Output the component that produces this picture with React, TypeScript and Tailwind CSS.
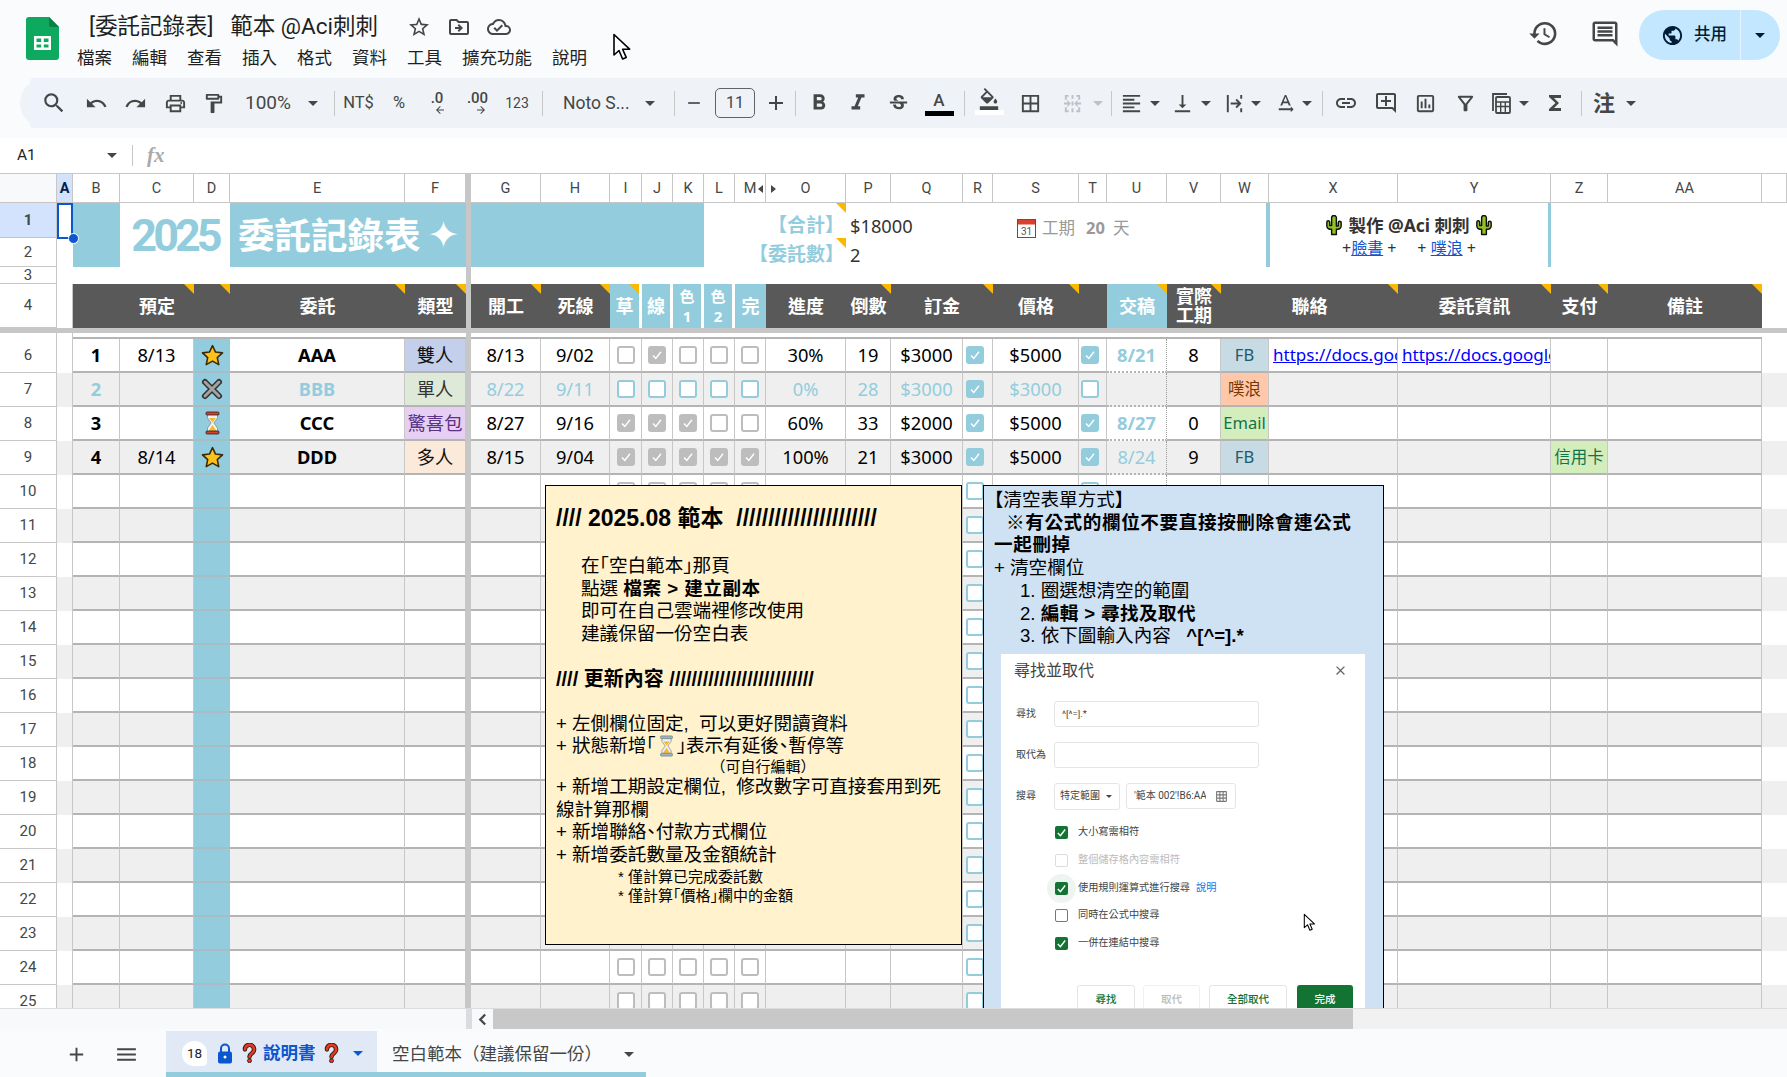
import type { ReactNode } from 'react';
import {
  MdAdd, MdArrowBack, MdArrowForward, MdBorderAll, MdClose, MdFormatAlignLeft, MdFormatBold, MdFormatItalic,
  MdFunctions, MdHistory, MdLink, MdMenu, MdOutlineAddComment, MdOutlineCloudDone, MdOutlineComment,
  MdOutlineDriveFileMove, MdOutlineFilterAlt, MdOutlineFormatColorFill, MdOutlineFormatPaint, MdOutlineGridOn,
  MdOutlineInsertChart, MdOutlinePrint, MdPublic, MdRedo, MdRemove, MdSearch, MdStarBorder, MdStrikethroughS,
  MdTextRotationNone, MdUndo, MdVerticalAlignBottom,
} from 'react-icons/md';

// one column template for every sheet row
const GRID =
  'grid grid-cols-[57px_16px_47px_74px_36px_175px_61px_5px_70px_69px_32px_31px_31px_31px_31px_80px_45px_72px_30px_86px_28px_60px_54px_48px_129px_153px_57px_154px_25px]';

const LETTERS = ['A', 'B', 'C', 'D', 'E', 'F', '', 'G', 'H', 'I', 'J', 'K', 'L', 'M', 'O', 'P', 'Q', 'R', 'S', 'T', 'U', 'V', 'W', 'X', 'Y', 'Z', 'AA', ''];

function Caret({ className = 'border-t-[#444746]' }: { className?: string }) {
  return <span className={`inline-block h-0 w-0 border-x-[5px] border-t-[5px] border-x-transparent ${className}`} />;
}

function Tri() {
  return <span className="absolute right-0 top-0 h-0 w-0 border-l-[10px] border-t-[10px] border-l-transparent border-t-[#fbb800]" />;
}

function T({ className, children }: { className: string; children?: ReactNode }) {
  return <div className={`flex h-full shrink-0 items-center justify-center ${className}`}>{children}</div>;
}

function Sep() {
  return <div className="h-[25px] w-px shrink-0 bg-[#c7c7c7]" />;
}

function Cursor({ className }: { className: string }) {
  return (
    <svg viewBox="0 0 20 28" className={className}>
      <path d="M2 1.5V22l5-4.5 3.6 8.5 3.6-1.6-3.6-8.2h7z" fill="#fff" stroke="#000" strokeWidth="1.6" strokeLinejoin="round" />
    </svg>
  );
}

function SheetsLogo() {
  return (
    <svg viewBox="0 0 33 43" className="h-[43px] w-[33px]">
      <path d="M3 0h20l10 10v30a3 3 0 0 1-3 3H3a3 3 0 0 1-3-3V3a3 3 0 0 1 3-3z" fill="#0da95f" />
      <path d="M23 0l10 10h-8a2 2 0 0 1-2-2z" fill="#0b7d46" />
      <path d="M8 19h17v14H8zM10.5 21.5v3.5h4.7v-3.5zM17.8 21.5v3.5h4.7v-3.5zM10.5 27.5v3h4.7v-3zM17.8 27.5v3h4.7v-3z" fill="#fff" fillRule="evenodd" />
    </svg>
  );
}

function Star() {
  return (
    <svg viewBox="0 0 24 24" className="h-[25px] w-[25px]">
      <path d="M12 2.5l2.9 6.2 6.7.8-5 4.6 1.4 6.7-6-3.4-6 3.4 1.4-6.7-5-4.6 6.7-.8z" fill="#fcc21b" stroke="#3a2a0a" strokeWidth="1.5" strokeLinejoin="round" />
    </svg>
  );
}

function Cross() {
  return (
    <svg viewBox="0 0 24 24" className="h-[24px] w-[24px]">
      <path d="M5 5l14 14M19 5L5 19" stroke="#2f2f2f" strokeWidth="6" strokeLinecap="round" />
      <path d="M5 5l14 14M19 5L5 19" stroke="#a3a3a3" strokeWidth="3" strokeLinecap="round" />
    </svg>
  );
}

function Hourglass({ className = 'h-[24px] w-[17px]', caps = '#d6402b', line = '#222' }: { className?: string; caps?: string; line?: string }) {
  return (
    <svg viewBox="0 0 16 24" className={className}>
      <path d="M3 3h10v4l-3.6 5 3.6 5v4H3v-4l3.6-5L3 7z" fill="#e9f3f8" stroke="#8a8a80" strokeWidth="0.8" />
      <path d="M4.5 7h7L8 11.5zM8 14l4 6H4z" fill="#f7b733" />
      <rect x="1.5" y="1" width="13" height="3" rx="1" fill={caps} stroke={line} strokeWidth="0.8" />
      <rect x="1.5" y="20" width="13" height="3" rx="1" fill={caps} stroke={line} strokeWidth="0.8" />
    </svg>
  );
}

function Cactus() {
  return (
    <svg viewBox="0 0 16 22" className="h-[21px] w-[16px] shrink-0">
      <path d="M5.5 20.500V15H4a3.500 3.500 0 0 1-3.500-3.500V7.500a1.500 1.500 0 0 1 3 0V11h2V3a2.500 2.500 0 0 1 5 0v8.500h2V8a1.500 1.500 0 0 1 3 0v3.500A3.500 3.500 0 0 1 12 15h-1.500v5.500z" fill="#8fc31f" stroke="#111" strokeWidth="1.500" strokeLinejoin="round" />
    </svg>
  );
}

function Question() {
  return (
    <svg viewBox="0 0 16 22" className="h-[20px] w-[15px] shrink-0">
      <path d="M3 7a5 5 0 1 1 8 4c-1.8 1.3-3 2-3 4" fill="none" stroke="#222" strokeWidth="5" strokeLinecap="round" />
      <circle cx="8" cy="19.5" r="2.2" fill="#e8391d" stroke="#222" />
      <path d="M3 7a5 5 0 1 1 8 4c-1.8 1.3-3 2-3 4" fill="none" stroke="#e8391d" strokeWidth="3" strokeLinecap="round" />
    </svg>
  );
}

function Lock() {
  return (
    <svg viewBox="0 0 16 21" className="h-[21px] w-[16px] shrink-0">
      <path d="M4 9V5.5a4 4 0 0 1 8 0V9" fill="none" stroke="#0b57d0" strokeWidth="2" />
      <rect x="1" y="8.5" width="14" height="12" rx="2" fill="#0b57d0" />
      <circle cx="8" cy="14" r="1.5" fill="#fff" />
    </svg>
  );
}

function Calendar() {
  return (
    <svg viewBox="0 0 19 19" className="h-[19px] w-[19px] shrink-0">
      <rect x="0.5" y="0.5" width="18" height="18" fill="#fff" stroke="#555" />
      <rect x="1" y="1" width="17" height="4.5" fill="#d9402f" />
      <text x="9.5" y="15.5" fontSize="10" textAnchor="middle" fill="#555" fontFamily="Roboto, sans-serif">31</text>
    </svg>
  );
}

function Box({ checked, tone }: { checked?: boolean; tone: 'gray' | 'teal' }) {
  const look =
    tone === 'gray'
      ? checked ? 'border-[#bdbdbd] bg-[#bdbdbd]' : 'border-[#bdbdbd] bg-white'
      : checked ? 'border-[#93cddd] bg-[#93cddd]' : 'border-[#93cddd] bg-white';
  return (
    <span className={`flex h-[18px] w-[18px] items-center justify-center rounded-[3px] border-[2.5px] ${look}`}>
      {checked && (
        <svg viewBox="0 0 12 12" className="h-[12px] w-[12px]">
          <path d="M2 6.5l2.8 3L10 2.8" fill="none" stroke="#fff" strokeWidth="1.4" />
        </svg>
      )}
    </span>
  );
}

function MiniBox({ on, tone = 'on' }: { on?: boolean; tone?: 'on' | 'off' | 'dim' }) {
  if (on) {
    return (
      <span className="flex h-[13px] w-[13px] shrink-0 items-center justify-center rounded-[2px] bg-[#137333]">
        <svg viewBox="0 0 12 12" className="h-[11px] w-[11px]">
          <path d="M2 6.5l2.8 3L10 2.8" fill="none" stroke="#fff" strokeWidth="1.6" />
        </svg>
      </span>
    );
  }
  return <span className={`h-[13px] w-[13px] shrink-0 rounded-[2px] border ${tone === 'dim' ? 'border-[#dcdcdc]' : 'border-[#777]'}`} />;
}

type RowData = {
  no: string;
  plan?: string;
  icon?: 'star' | 'cross' | 'glass';
  name: string;
  type: string;
  typeClass: string;
  start: string;
  end: string;
  steps: boolean[];
  progress: string;
  left: string;
  deposit: string;
  price: string;
  paid: boolean;
  done?: string;
  doneClass?: string;
  actual?: string;
  contact?: string;
  contactClass?: string;
  link?: boolean;
  pay?: string;
};

const DATA: RowData[] = [
  { no: '1', plan: '8/13', icon: 'star', name: 'AAA', type: '雙人', typeClass: 'bg-[#c3cfeb] text-[#111]', start: '8/13', end: '9/02', steps: [false, true, false, false, false], progress: '30%', left: '19', deposit: '$3000', price: '$5000', paid: true, done: '8/21', doneClass: 'font-bold', actual: '8', contact: 'FB', contactClass: 'bg-[#c6dbe3] text-[#215a6c]', link: true },
  { no: '2', icon: 'cross', name: 'BBB', type: '單人', typeClass: 'bg-[#dfe9d8] text-[#333]', start: '8/22', end: '9/11', steps: [false, false, false, false, false], progress: '0%', left: '28', deposit: '$3000', price: '$3000', paid: false, contact: '噗浪', contactClass: 'bg-[#ffc8aa] text-[#753800]' },
  { no: '3', icon: 'glass', name: 'CCC', type: '驚喜包', typeClass: 'bg-[#e6cff2] text-[#5a3286]', start: '8/27', end: '9/16', steps: [true, true, true, false, false], progress: '60%', left: '33', deposit: '$2000', price: '$5000', paid: true, done: '8/27', doneClass: 'font-bold', actual: '0', contact: 'Email', contactClass: 'bg-[#d4edbc] text-[#11734b]' },
  { no: '4', plan: '8/14', icon: 'star', name: 'DDD', type: '多人', typeClass: 'bg-[#fbe9da] text-[#111]', start: '8/15', end: '9/04', steps: [true, true, true, true, true], progress: '100%', left: '21', deposit: '$3000', price: '$5000', paid: true, done: '8/24', doneClass: 'font-normal', actual: '9', contact: 'FB', contactClass: 'bg-[#c6dbe3] text-[#215a6c]', pay: '信用卡' },
];

const V = 'border-r border-r-[#c7c7c7] border-b-2 border-b-[#b4b4b4] flex items-center justify-center overflow-hidden whitespace-nowrap';

function RowHead({ n, active, className = '' }: { n?: number; active?: boolean; className?: string }) {
  return (
    <div className={`flex items-center justify-center border-b border-r border-[#c7c7c7] text-[15px] text-[#444746] font-['Roboto','Noto_Sans_CJK_TC',sans-serif] ${active ? 'bg-[#d3e3fd] font-bold text-[#041e49]' : 'bg-white'} ${className}`}>
      {n}
    </div>
  );
}

function SheetRow({ n, data }: { n: number; data?: RowData }) {
  const gray = n % 2 === 1;
  const bg = gray ? 'bg-[#efefef]' : 'bg-white';
  const dim = data?.no === '2';
  const ink = dim ? 'text-[#93cddd]' : 'text-black';
  const tone = dim ? 'teal' : 'gray';
  const steps = data?.steps ?? [false, false, false, false, false];
  return (
    <div className={`${GRID} h-[34px] text-[18.3px] ${bg} ${ink}`}>
      <RowHead n={n} className="bg-white" />
      <div className={`border-r border-[#c7c7c7] ${bg}`} />
      <div className={`${V} font-bold`}>{data?.no}</div>
      <div className={V}>{data?.plan}</div>
      <div className="flex items-center justify-center border-b-2 border-b-[#a9bcc3] bg-[#93cddd]">
        {data?.icon === 'star' && <Star />}
        {data?.icon === 'cross' && <Cross />}
        {data?.icon === 'glass' && <Hourglass />}
      </div>
      <div className={`${V} font-bold`}>{data?.name}</div>
      <div className={`${V} ${data?.typeClass ?? ''}`}>{data?.type}</div>
      <div className="bg-[#c7c7c7]" />
      <div className={V}>{data?.start}</div>
      <div className={V}>{data?.end}</div>
      {steps.map((on, i) => (
        <div key={i} className={V}><Box checked={on} tone={tone} /></div>
      ))}
      <div className={V}>{data?.progress}</div>
      <div className={V}>{data?.left}</div>
      <div className={V}>{data?.deposit}</div>
      <div className={`${V} justify-start pl-[3px]`}><Box checked={!!data} tone="teal" /></div>
      <div className={V}>{data?.price}</div>
      <div className={`${V} justify-start pl-[2px]`}><Box checked={data?.paid} tone="teal" /></div>
      <div className={`flex items-center justify-center border-b-2 border-r border-b-[#b4b4b4] border-r-[#999] border-dotted text-[#93cddd] ${data?.doneClass ?? ''}`}>{data?.done}</div>
      <div className={V}>{data?.actual}</div>
      <div className={`${V} text-[16.5px] ${data?.contactClass ?? ''}`}>{data?.contact}</div>
      <div className={`${V} justify-start pl-[4px]`}>
        {data?.link && <span className="text-[17px] text-[#0000ff] underline">https://docs.google.com/</span>}
      </div>
      <div className={`${V} justify-start pl-[4px]`}>
        {data?.link && <span className="text-[17px] text-[#0000ff] underline">https://docs.google.com/</span>}
      </div>
      <div className={`${V} text-[16.5px] ${data?.pay ? 'bg-[#d4edbc] text-[#11734b]' : ''}`}>{data?.pay}</div>
      <div className={V} />
      <div />
    </div>
  );
}

function TopBar() {
  return (
    <div className="flex h-[78px] shrink-0 items-start pl-[26px] pr-[7px] font-['Roboto','Noto_Sans_CJK_TC',sans-serif]">
      <div className="mt-[17px]"><SheetsLogo /></div>
      <div className="ml-[18px] flex flex-col">
        <div className="mt-[10px] flex h-[34px] items-center pl-[12px] text-[#1f1f1f]">
          <span className="w-[310px] whitespace-pre text-[22.500px]">[委託記錄表]   範本 @Aci刺刺</span>
          <T className="w-[40px]"><MdStarBorder className="text-[24px] text-[#444746]" /></T>
          <T className="w-[40px]"><MdOutlineDriveFileMove className="text-[24px] text-[#444746]" /></T>
          <T className="w-[40px]"><MdOutlineCloudDone className="text-[24px] text-[#444746]" /></T>
        </div>
        <div className="mt-[2px] flex gap-[20px] text-[17.5px] leading-[24px] text-[#1f1f1f]">
          <span>檔案</span><span>編輯</span><span>查看</span><span>插入</span><span>格式</span><span>資料</span><span>工具</span><span>擴充功能</span><span>說明</span>
        </div>
      </div>
      <Cursor className="absolute left-[612px] top-[33px] h-[28px] w-[20px]" />
      <div className="ml-auto flex items-start">
        <div className="mt-[18px] flex w-[62px] justify-center"><MdHistory className="text-[31px] text-[#444746]" /></div>
        <div className="mt-[19px] flex w-[62px] justify-center"><MdOutlineComment className="text-[30px] text-[#444746]" /></div>
        <div className="ml-[3px] mt-[10px] flex h-[50px] w-[141px] items-center rounded-full bg-[#c2e7ff] text-[#001d35]">
          <MdPublic className="ml-[22px] text-[23px]" />
          <span className="ml-[10px] w-[36px] whitespace-nowrap text-[16.5px] font-medium">共用</span>
          <span className="ml-[10px] h-full w-px bg-[#e4f3ff]" />
          <span className="ml-[14px] flex"><Caret className="border-t-[#001d35]" /></span>
        </div>
      </div>
    </div>
  );
}

function Toolbar() {
  const icon = 'text-[23px] text-[#444746]';
  return (
    <div className="flex h-[60px] shrink-0 items-start pl-[20px] font-['Roboto','Noto_Sans_CJK_TC',sans-serif] text-[#444746]">
      <div className="flex h-[50px] w-[1767px] items-center rounded-l-[25px] bg-[#eff3f8] pl-[10px] text-[16px]">
        <T className="w-[48px] rounded-[4px] bg-[#eef2fa]"><MdSearch className="text-[26px] text-[#444746]" /></T>
        <T className="w-[37px]"><MdUndo className={icon} /></T>
        <T className="w-[40px]"><MdRedo className={icon} /></T>
        <T className="w-[40px]"><MdOutlinePrint className={icon} /></T>
        <T className="w-[37px]"><MdOutlineFormatPaint className={icon} /></T>
        <T className="w-[72px] text-[19px]">100%</T>
        <T className="w-[18px]"><Caret /></T>
        <div className="w-[12px] shrink-0" />
        <Sep />
        <T className="w-[47px] text-[16.500px]">NT$</T>
        <T className="w-[34px] text-[16.500px]">%</T>
        <T className="w-[42px]">
          <div className="flex flex-col items-center leading-[14px]">
            <span className="text-[15px] font-medium">.0</span>
            <MdArrowBack className="-mt-[1px] ml-[6px] text-[12px]" />
          </div>
        </T>
        <T className="w-[39px]">
          <div className="flex flex-col items-center leading-[14px]">
            <span className="text-[15px] font-medium">.00</span>
            <MdArrowForward className="-mt-[1px] ml-[6px] text-[12px]" />
          </div>
        </T>
        <T className="w-[40px] text-[14px]">123</T>
        <div className="w-[5px] shrink-0" />
        <Sep />
        <T className="w-[99px] justify-start pl-[20px] text-[17.5px]">Noto S...</T>
        <T className="w-[16px]"><Caret /></T>
        <div className="w-[16px] shrink-0" />
        <Sep />
        <T className="w-[38px]"><MdRemove className="text-[20px]" /></T>
        <div className="ml-[2px] flex h-[30px] w-[40px] shrink-0 items-center justify-center rounded-[5px] border border-[#5f6368] text-[16px]">11</div>
        <T className="ml-[2px] w-[38px]"><MdAdd className="text-[24px]" /></T>
        <Sep />
        <T className="w-[46px]"><MdFormatBold className="text-[26px]" /></T>
        <T className="w-[32px]"><MdFormatItalic className="text-[26px]" /></T>
        <T className="w-[49px]"><MdStrikethroughS className={icon} /></T>
        <T className="w-[32px]">
          <div className="flex flex-col items-center">
            <span className="text-[17px] font-medium leading-[20px]">A</span>
            <span className="mt-[1px] h-[5px] w-[29px] bg-black" />
          </div>
        </T>
        <div className="w-[9px] shrink-0" />
        <Sep />
        <T className="w-[48px]">
          <div className="flex flex-col items-center">
            <MdOutlineFormatColorFill className="-mt-[4px] text-[22px]" />
            <span className="h-[5px] w-[29px] bg-white" />
          </div>
        </T>
        <T className="w-[35px]"><MdBorderAll className={icon} /></T>
        <T className="w-[44px] pl-[4px]">
          <svg viewBox="0 0 24 24" className="h-[23px] w-[23px]" fill="#bdc1c6">
            <path d="M4 3h4v2H6v3H4zM16 3h4v5h-2V5h-2zM4 16h2v3h2v2H4zM18 16h2v5h-4v-2h2zM11 3h2v4h-2zM11 10h2v4h-2zM11 17h2v4h-2zM3 11h4.5L6 9.5l1-1 3.2 3.5L7 15.500l-1-1L7.500 13H3zM21 11h-4.500L18 9.500l-1-1-3.200 3.500 3.200 3.500 1-1L16.500 13H21z" />
          </svg>
        </T>
        <T className="w-[12px]"><Caret className="border-t-[#bdc1c6]" /></T>
        <div className="w-[7px] shrink-0" />
        <Sep />
        <T className="w-[38px]"><MdFormatAlignLeft className={icon} /></T>
        <T className="w-[10px]"><Caret /></T>
        <T className="w-[41px] pl-[4px]"><MdVerticalAlignBottom className={icon} /></T>
        <T className="w-[10px]"><Caret /></T>
        <T className="w-[40px] pl-[6px]">
          <svg viewBox="0 0 24 24" className="h-[23px] w-[23px]" fill="#444746">
            <path d="M4 3h2v18H4zM8 11h7.500l-2.500-2.500 1.400-1.400L19.300 12l-4.900 4.900-1.400-1.400 2.500-2.500H8zM18 3h2v4h-2zM18 17h2v4h-2z" />
          </svg>
        </T>
        <T className="w-[10px]"><Caret /></T>
        <T className="w-[41px] pl-[7px]"><MdTextRotationNone className={icon} /></T>
        <T className="w-[10px]"><Caret /></T>
        <div className="w-[10px] shrink-0" />
        <Sep />
        <T className="w-[46px]"><MdLink className="text-[24px]" /></T>
        <T className="w-[34px]"><MdOutlineAddComment className="text-[24px]" /></T>
        <T className="w-[44px]"><MdOutlineInsertChart className={icon} /></T>
        <T className="w-[36px]"><MdOutlineFilterAlt className={icon} /></T>
        <T className="w-[36px]">
          <svg viewBox="0 0 24 24" className="h-[24px] w-[24px]" fill="none" stroke="#444746" strokeWidth="1.800">
            <path d="M4 20V3h14" />
            <rect x="7" y="6" width="14" height="16" rx="1" />
            <path d="M7 11h14M7 15.500h14M11.700 11v11M16.300 11v11" strokeWidth="1.400" />
          </svg>
        </T>
        <T className="w-[10px]"><Caret /></T>
        <T className="w-[52px]"><MdFunctions className="text-[24px]" /></T>
        <Sep />
        <T className="w-[44px] text-[22px] font-bold">注</T>
        <T className="w-[10px]"><Caret /></T>
      </div>
    </div>
  );
}

function SearchDialog() {
  const field = 'rounded-[3px] border border-[#e5e5e5] bg-white';
  return (
    <div className="ml-[17px] mt-[6px] h-[400px] w-[364px] bg-white font-['Roboto','Noto_Sans_CJK_TC',sans-serif] text-[#444]">
      <div className="flex h-[34px] items-center justify-between pl-[13px] pr-[17px] text-[16px]">
        <span>尋找並取代</span>
        <MdClose className="text-[15px] text-[#666]" />
      </div>
      <div className="mt-[13px] flex items-center pl-[15px] text-[10px]">
        <span className="w-[38px]">尋找</span>
        <div className={`flex h-[26px] w-[205px] items-center pl-[7px] text-[9.500px] ${field}`}>^[^=].*</div>
      </div>
      <div className="mt-[15px] flex items-center pl-[15px] text-[10px]">
        <span className="w-[38px]">取代為</span>
        <div className={`h-[26px] w-[205px] ${field}`} />
      </div>
      <div className="mt-[15px] flex items-center pl-[15px] text-[10px]">
        <span className="w-[38px]">搜尋</span>
        <div className={`flex h-[27px] w-[66px] items-center justify-center gap-[4px] ${field}`}>
          特定範圍 <Caret className="scale-[0.6] border-t-[#444]" />
        </div>
        <div className={`ml-[6px] flex h-[26px] w-[110px] items-center justify-between pl-[7px] pr-[7px] ${field}`}>
          <span className="w-[72px] overflow-hidden whitespace-nowrap">'範本 002'!B6:AA</span>
          <MdOutlineGridOn className="text-[13px] text-[#777]" />
        </div>
      </div>
      <div className="mt-[9px] flex flex-col pl-[54px] text-[10.200px]">
        <div className="flex h-[27.700px] items-center gap-[10px]"><MiniBox on />大小寫需相符</div>
        <div className="flex h-[27.700px] items-center gap-[10px] text-[#bbb]"><MiniBox tone="dim" />整個儲存格內容需相符</div>
        <div className="flex h-[27.700px] items-center gap-[10px]">
          <span className="relative flex">
            <span className="absolute -inset-[8px] rounded-full bg-[#eef5f0]" />
            <span className="relative flex"><MiniBox on /></span>
          </span>
          <span className="relative">使用規則運算式進行搜尋<span className="ml-[6px] text-[#1a73e8]">說明</span></span>
        </div>
        <div className="flex h-[27.700px] items-center gap-[10px]"><MiniBox />同時在公式中搜尋</div>
        <div className="flex h-[27.700px] items-center gap-[10px]"><MiniBox on />一併在連結中搜尋</div>
      </div>
      <div className="mt-[28px] flex pl-[76px] text-[10.500px] font-medium">
        <div className={`flex h-[30px] w-[58px] items-center justify-center text-[#137333] ${field}`}>尋找</div>
        <div className="ml-[8px] flex h-[30px] w-[57px] items-center justify-center rounded-[3px] border border-[#f0f0f0] text-[#bbb]">取代</div>
        <div className={`ml-[9px] flex h-[30px] w-[78px] items-center justify-center text-[#137333] ${field}`}>全部取代</div>
        <div className="ml-[10px] flex h-[30px] w-[56px] items-center justify-center rounded-[3px] bg-[#137333] text-white">完成</div>
      </div>
    </div>
  );
}

function Sheet() {
  const dark = 'relative flex items-center justify-center bg-[#595959] text-[18px] font-bold text-white';
  const teal = 'relative flex items-center justify-center bg-[#93cddd] text-[18px] font-bold text-white';
  const small = 'relative flex flex-col items-center justify-center border-r-[3px] border-white bg-[#93cddd] text-[15px] font-bold leading-[20px] text-white';
  const noteFont = "font-['Liberation_Sans','Noto_Sans_CJK_TC',sans-serif] [font-feature-settings:'halt'] text-[18.600px] leading-[22.700px] text-black";
  return (
    <div className="relative min-h-0 flex-1 overflow-hidden font-['Noto_Sans','Noto_Sans_CJK_TC',sans-serif]">
      {/* column letters */}
      <div className={`${GRID} h-[30px] border-t border-[#c7c7c7] font-['Roboto',sans-serif] text-[14.500px] text-[#444746]`}>
        <div className="border-b border-r border-[#c7c7c7] bg-[#f8f9fa]" />
        {LETTERS.map((l, i) =>
          i === 6 ? (
            <div key={i} className="bg-[#c7c7c7]" />
          ) : (
            <div key={i} className={`relative flex items-center justify-center border-b border-r border-[#c7c7c7] pt-[2px] ${l === 'A' ? 'bg-[#d3e3fd] font-bold text-[#041e49]' : 'bg-white'}`}>
              {l}
              {l === 'M' && <span className="absolute right-[2px] h-0 w-0 border-y-[4px] border-r-[5px] border-y-transparent border-r-[#444746]" />}
              {l === 'O' && <span className="absolute left-[5px] h-0 w-0 border-y-[4px] border-l-[5px] border-y-transparent border-l-[#444746]" />}
            </div>
          ),
        )}
      </div>

      {/* rows 1-3 with the merged title cells */}
      <div className={`${GRID} grid-rows-[35px_29px_17px]`}>
        <RowHead n={1} active className="col-start-1 row-start-1" />
        <RowHead n={2} className="col-start-1 row-start-2" />
        <RowHead n={3} className="col-start-1 row-start-3" />
        <div className="col-start-3 row-span-2 row-start-1 bg-[#93cddd]" />
        <div className="col-span-2 col-start-4 row-span-2 row-start-1 flex items-center justify-center pt-[2px] text-[45px] font-bold tracking-[-4px] text-[#93cddd] font-['Roboto',sans-serif]">2025</div>
        <div className="col-span-2 col-start-6 row-span-2 row-start-1 flex items-center overflow-hidden whitespace-nowrap bg-[#93cddd] pl-[8px] text-[36.500px] font-bold leading-none text-white">
          委託記錄表<span className="ml-[7px] text-[38px] leading-none font-['DejaVu_Sans',sans-serif]">✦</span>
        </div>
        <div className="col-start-8 row-span-3 row-start-1 bg-[#c7c7c7]" />
        <div className="col-span-5 col-start-9 row-span-2 row-start-1 bg-[#93cddd]" />
        <div className="relative col-span-3 col-start-14 row-start-1 flex items-end justify-end pr-[2px] text-[19px] font-bold leading-[25px] text-[#93cddd]">【合計】<Tri /></div>
        <div className="relative col-span-3 col-start-14 row-start-2 flex items-end justify-end pr-[2px] text-[19px] font-bold leading-[25px] text-[#93cddd]">【委託數】<Tri /></div>
        <div className="col-span-3 col-start-17 row-start-1 flex items-end pl-[4px] text-[18.300px] leading-[25px] text-[#333]">$18000</div>
        <div className="col-span-3 col-start-17 row-start-2 flex items-end pl-[4px] text-[18.300px] leading-[25px] text-[#333]">2</div>
        <div className="col-span-5 col-start-20 row-span-2 row-start-1 flex items-start gap-[6px] pl-[24px] pt-[13px] text-[16.500px] leading-[24px] text-[#999]">
          <span className="mt-[3px]"><Calendar /></span>
          <span>工期</span>
          <span className="ml-[5px] font-bold">20</span>
          <span className="ml-[2px]">天</span>
        </div>
        <div className="col-span-2 col-start-25 row-span-2 row-start-1 -ml-[3px] flex flex-col items-center border-l-[4px] border-r-[3px] border-[#93cddd]">
          <div className="mt-[9px] flex items-center gap-[6px] text-[17.500px] font-bold leading-[26px] text-[#333]">
            <Cactus />製作 @Aci 刺刺<Cactus />
          </div>
          <div className="whitespace-pre text-[16px] leading-[20px] text-[#333]">
            +<span className="text-[#1155cc] underline">臉書</span> +     + <span className="text-[#1155cc] underline">噗浪</span> +
          </div>
        </div>
      </div>

      {/* row 4: dark header */}
      <div className={`${GRID} h-[44px]`}>
        <RowHead n={4} />
        <div className="border-r border-[#c7c7c7]" />
        <div className={dark} />
        <div className={dark}>預定<Tri /></div>
        <div className={dark}><Tri /></div>
        <div className={dark}>委託<Tri /></div>
        <div className={dark}>類型<Tri /></div>
        <div className="bg-[#c7c7c7]" />
        <div className={dark}>開工<Tri /></div>
        <div className={dark}>死線<Tri /></div>
        <div className={`${teal} border-r-[3px] border-white`}>草<Tri /></div>
        <div className={`${teal} border-r-[3px] border-white`}>線</div>
        <div className={small}><span>色</span><span>1</span></div>
        <div className={small}><span>色</span><span>2</span></div>
        <div className={`${teal} text-[16px]`}>完</div>
        <div className={dark}>進度</div>
        <div className={dark}>倒數<Tri /></div>
        <div className={`${dark} col-span-2`}>訂金<Tri /></div>
        <div className={dark}>價格<Tri /></div>
        <div className={dark} />
        <div className={teal}>交稿<Tri /></div>
        <div className={`${dark} flex-col text-[15px] leading-[19px]`}><span>實際</span><span>工期</span><Tri /></div>
        <div className={`${dark} col-span-2`}>聯絡<Tri /></div>
        <div className={dark}>委託資訊<Tri /></div>
        <div className={dark}>支付<Tri /></div>
        <div className={dark}>備註<Tri /></div>
        <div />
      </div>

      {/* frozen rows divider */}
      <div className="h-[5px] bg-[#c7c7c7]" />
      <div className={`${GRID} h-[6px]`}>
        <div className="border-r border-[#c7c7c7]" />
        <div className="border-r border-[#c7c7c7]" />
        <div className="col-span-5 border-b-2 border-[#b4b4b4]" />
        <div className="bg-[#c7c7c7]" />
        <div className="col-span-20 border-b-2 border-[#b4b4b4]" />
        <div />
      </div>

      {Array.from({ length: 20 }, (_, i) => (
        <SheetRow key={i} n={i + 6} data={DATA[i]} />
      ))}

      {/* selected cell A1 */}
      <div className="absolute left-[57px] top-[30px] h-[36px] w-[16px] border-2 border-[#0b57d0]" />
      <div className="absolute left-[68px] top-[60px] h-[11px] w-[11px] rounded-full border border-white bg-[#0b57d0]" />

      {/* yellow note */}
      <div className={`absolute left-[545px] top-[312px] h-[460px] w-[417px] border-[1.500px] border-black bg-[#fff2cc] pl-[10px] pt-[18px] ${noteFont}`}>
        <div className="text-[23px] font-bold leading-[28px]">//// 2025.08 範本 &nbsp;//////////////////////</div>
        <div className="mt-[23px] pl-[25px]">
          <div>在「空白範本」那頁</div>
          <div>點選 <b className="tracking-[0.5px]">檔案 &gt; 建立副本</b></div>
          <div>即可在自己雲端裡修改使用</div>
          <div>建議保留一份空白表</div>
        </div>
        <div className="mt-[22px] text-[20px] font-bold">//// 更新內容 //////////////////////////</div>
        <div className="mt-[22px]">
          <div>+ 左側欄位固定,&nbsp; 可以更好閱讀資料</div>
          <div className="flex">+ 狀態新增「<Hourglass className="mx-[3px] h-[22px] w-[15px]" caps="#9fb4bf" line="#6d7f88" />」表示有延後、暫停等</div>
          <div className="pl-[162px] text-[15px] leading-[18px]">（可自行編輯）</div>
          <div className="w-[395px]">+ 新增工期設定欄位,&nbsp; 修改數字可直接套用到死線計算那欄</div>
          <div>+ 新增聯絡、付款方式欄位</div>
          <div>+ 新增委託數量及金額統計</div>
          <div className="pl-[62px] text-[15px] leading-[19px]">
            <div>* 僅計算已完成委託數</div>
            <div>* 僅計算「價格」欄中的金額</div>
          </div>
        </div>
      </div>

      {/* blue note */}
      <div className={`absolute left-[983px] top-[312px] h-[560px] w-[401px] border-[1.500px] border-black bg-[#cfe2f3] pt-[3px] ${noteFont}`}>
        <div className="pl-[10px]">【清空表單方式】</div>
        <div className="pl-[10px] font-bold tracking-[0.6px]">
          <div className="whitespace-nowrap pl-[12px]">※有公式的欄位不要直接按刪除會連公式</div>
          <div>一起刪掉</div>
        </div>
        <div className="pl-[10px]">+ 清空欄位</div>
        <div className="pl-[36px]">
          <div>1. 圈選想清空的範圍</div>
          <div>2. <b className="tracking-[0.4px]">編輯 &gt; 尋找及取代</b></div>
          <div>3. 依下圖輸入內容 &nbsp; <b>^[^=].*</b></div>
        </div>
        <SearchDialog />
      </div>
      <Cursor className="absolute left-[1303px] top-[740px] h-[19px] w-[13px]" />
    </div>
  );
}

function Scrollbar() {
  return (
    <div className="flex h-[21px] shrink-0 border-t border-[#dadce0] bg-[#f8f9fa]">
      <div className="w-[466px] shrink-0" />
      <div className="w-[6px] shrink-0 bg-[#dadce0]" />
      <div className="flex w-[21px] shrink-0 items-center justify-center text-[#444746]">
        <svg viewBox="0 0 10 14" className="h-[13px] w-[9px]"><path d="M8 1.500L2.500 7 8 12.500" fill="none" stroke="#444746" strokeWidth="2.500" /></svg>
      </div>
      <div className="w-[860px] shrink-0 bg-[#c8c8c8]" />
      <div className="flex-1 bg-[#f1f1f1]" />
    </div>
  );
}

function TabBar() {
  return (
    <div className="flex h-[48px] shrink-0 items-end bg-[#f9fbfd] font-['Roboto','Noto_Sans_CJK_TC',sans-serif] text-[17.500px]">
      <div className="flex h-[48px] w-[166px] shrink-0 items-center gap-[26px] pl-[65px] pt-[3px]">
        <MdAdd className="text-[23px] text-[#444746]" />
        <MdMenu className="text-[25px] text-[#444746]" />
      </div>
      <div className="flex h-[46px] w-[211px] items-center border-b-[5px] border-[#93cddd] bg-[#e1e9f7] pl-[16px] pt-[3px]">
        <span className="flex h-[25px] w-[25px] items-center justify-center rounded-[12px] rounded-br-[4px] bg-white text-[13.500px] text-[#222]">18</span>
        <span className="ml-[10px] flex"><Lock /></span>
        <span className="ml-[9px] flex"><Question /></span>
        <span className="ml-[6px] font-bold text-[#0b57d0]">說明書</span>
        <span className="ml-[8px] flex"><Question /></span>
        <span className="ml-[14px] flex"><Caret className="border-t-[#0b57d0]" /></span>
      </div>
      <div className="flex h-[46px] w-[269px] items-center border-b-[5px] border-[#93cddd] pl-[15px] pt-[6px] text-[#444746]">
        <span className="whitespace-nowrap">空白範本（建議保留一份）</span>
        <span className="ml-[22px] flex"><Caret /></span>
      </div>
    </div>
  );
}

export default function App() {
  return (
    <div className="relative flex h-[1077px] w-[1787px] flex-col overflow-hidden bg-white font-['Noto_Sans','Noto_Sans_CJK_TC',sans-serif]">
      <div className="bg-[#f9fbfd]">
        <TopBar />
        <Toolbar />
      </div>
      <div className="flex h-[35px] shrink-0 items-center bg-white font-['Roboto','Noto_Sans_CJK_TC',sans-serif]">
        <span className="w-[107px] pl-[17px] text-[15.500px] text-[#1f1f1f]">A1</span>
        <Caret />
        <span className="ml-[15px] h-[21px] w-px bg-[#c7c7c7]" />
        <span className="ml-[14px] font-['Liberation_Serif',serif] text-[21px] font-bold italic text-[#aaa]">fx</span>
      </div>
      <Sheet />
      <Scrollbar />
      <TabBar />
    </div>
  );
}
